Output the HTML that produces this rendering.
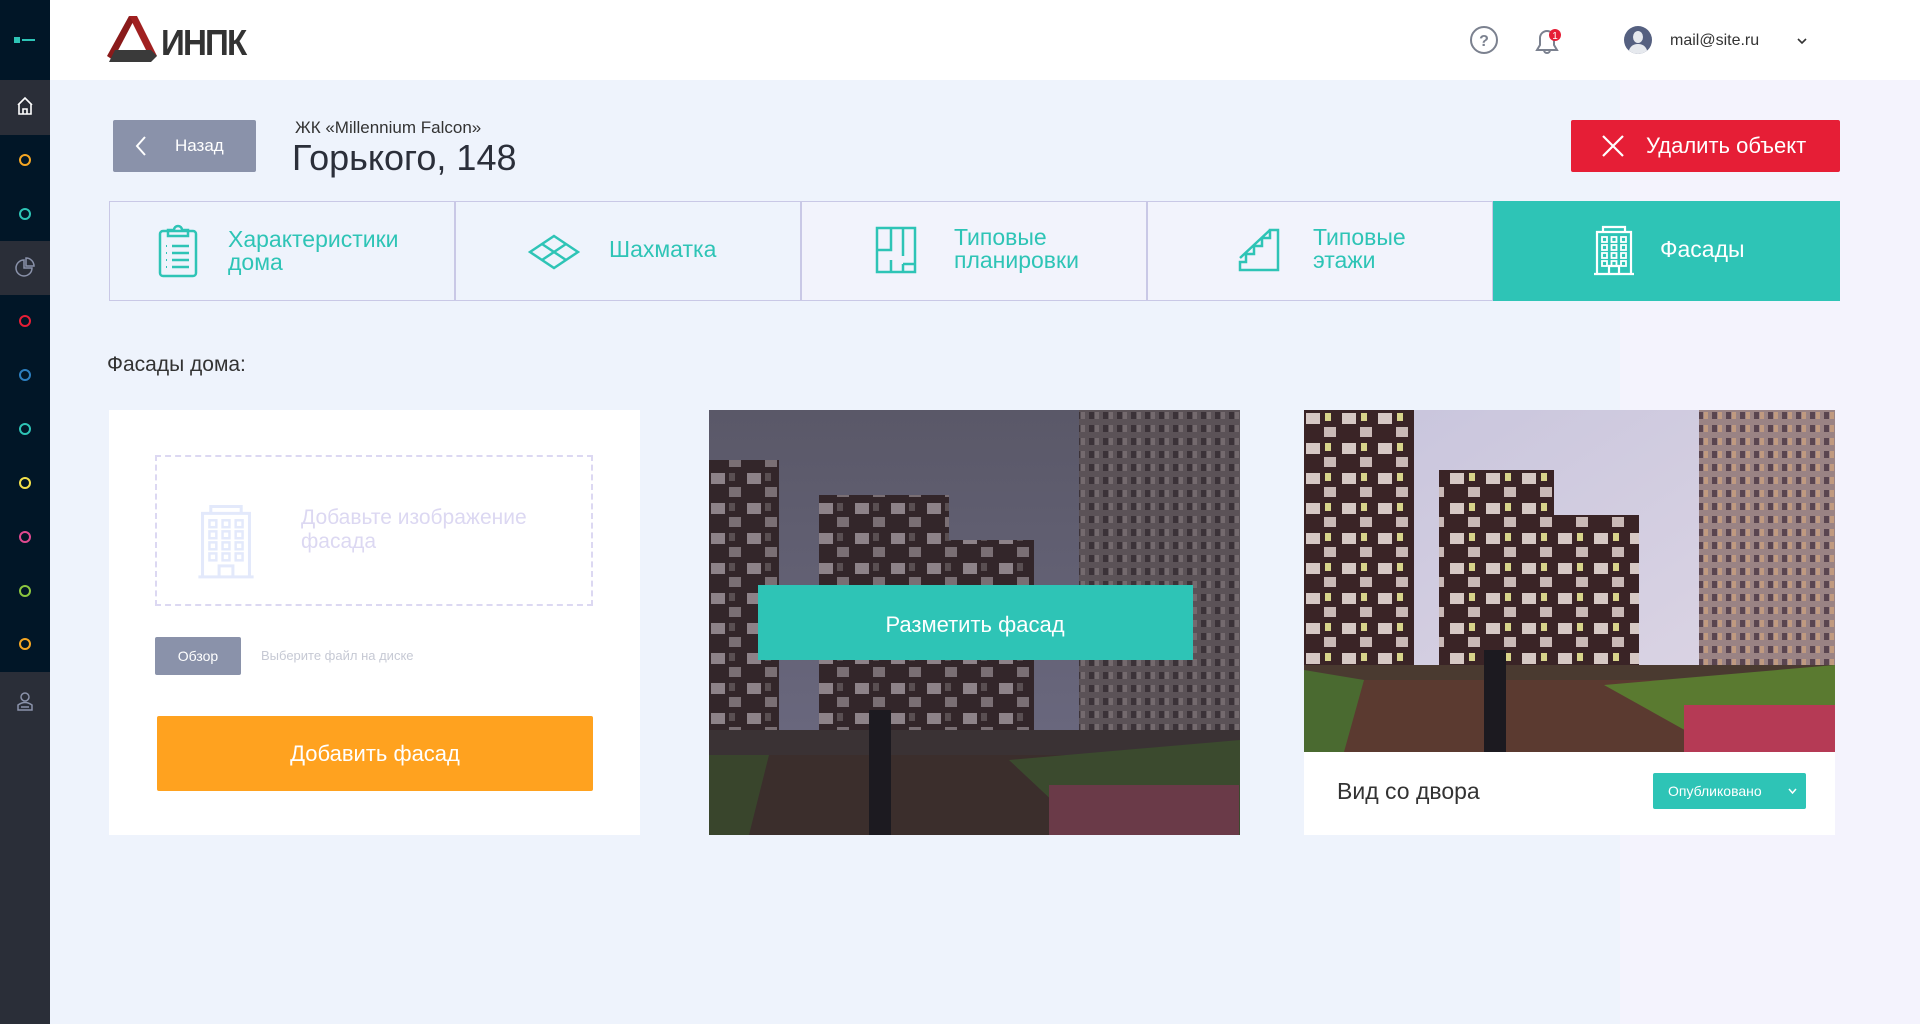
<!DOCTYPE html>
<html><head><meta charset="utf-8">
<style>
*{margin:0;padding:0;box-sizing:border-box}
body{width:1920px;height:1024px;overflow:hidden;background:#eef3fc;font-family:"Liberation Sans",sans-serif;position:relative;color:#2b2f3a}
.abs{position:absolute}
#side{left:0;top:0;width:50px;height:1024px;background:#011627}
.ci{position:absolute;left:19px;width:12px;height:12px;border-radius:50%;border:2px solid}
#hdr{left:50px;top:0;width:1870px;height:80px;background:#fff}
.tab{position:absolute;top:201px;height:100px;width:346px;border:1px solid #c9c8e6;display:flex;align-items:center;font-size:23px;color:#2ec4b6;line-height:23px}
.card{position:absolute;top:410px;height:425px;width:531px;background:#fff}
</style></head><body>
<div id="side" class="abs">
 <div class="abs" style="left:14px;top:37px;width:6px;height:6px;background:#2ec4b6"></div>
 <div class="abs" style="left:22px;top:39px;width:13px;height:2px;background:#2ec4b6"></div>
 <div class="abs" style="left:0;top:80px;width:50px;height:55px;background:#2a2e38"></div>
 <svg class="abs" style="left:16px;top:96px" width="18" height="20" viewBox="0 0 18 20"><path d="M2 9 L9 2 L16 9 M3 8 V18 H15 V8 M7 18 V13 H11 V18" fill="none" stroke="#fff" stroke-width="1.6"/></svg>
 <div class="ci" style="top:154px;border-color:#f5a623"></div>
 <div class="ci" style="top:208px;border-color:#2ec4b6"></div>
 <div class="abs" style="left:0;top:241px;width:50px;height:54px;background:#2a2e38"></div>
 <svg class="abs" style="left:15px;top:257px" width="20" height="20" viewBox="0 0 20 20"><path d="M9 3 A8 8 0 1 0 17 11 H9 Z" fill="none" stroke="#8a92aa" stroke-width="1.5"/><path d="M11 1 A8 8 0 0 1 19 9 H11 Z" fill="none" stroke="#8a92aa" stroke-width="1.5"/></svg>
 <div class="ci" style="top:315px;border-color:#e61e36"></div>
 <div class="ci" style="top:369px;border-color:#2d7fc0"></div>
 <div class="ci" style="top:423px;border-color:#2ec4b6"></div>
 <div class="ci" style="top:477px;border-color:#f3e14b"></div>
 <div class="ci" style="top:531px;border-color:#e0498f"></div>
 <div class="ci" style="top:585px;border-color:#8cc63f"></div>
 <div class="ci" style="top:638px;border-color:#f5a623"></div>
 <div class="abs" style="left:0;top:672px;width:50px;height:352px;background:#2a2e38"></div>
 <svg class="abs" style="left:16px;top:691px" width="18" height="20" viewBox="0 0 18 20"><circle cx="9" cy="6" r="4" fill="none" stroke="#8a92aa" stroke-width="1.5"/><path d="M2 19 V14 Q9 9 16 14 V19 Z M5 16 H13" fill="none" stroke="#8a92aa" stroke-width="1.5"/></svg>
</div>
<div id="hdr" class="abs">
 <svg class="abs" style="left:57px;top:16px" width="50" height="46" viewBox="0 0 50 46"><path d="M22 0 L30 0 L50 40 L42 40 Z" fill="#a02020"/><path d="M22 0 L0 40 L6 44 L26 6 Z" fill="#8a1a1a"/><path d="M8 34 H44 L50 40 L44 46 H2 Z" fill="#3a3a3a"/></svg>
 <div class="abs" style="left:111px;top:25px;font-size:36px;font-weight:bold;color:#333;letter-spacing:-2px;line-height:36px;transform:scaleX(0.92);transform-origin:left">ИНПК</div>
 <svg class="abs" style="left:1419px;top:25px" width="30" height="30" viewBox="0 0 30 30"><circle cx="15" cy="15" r="13" fill="none" stroke="#7b818f" stroke-width="2"/><text x="15" y="21" font-size="16" text-anchor="middle" fill="#7b818f" font-family="Liberation Sans" font-weight="bold">?</text></svg>
 <svg class="abs" style="left:1483px;top:25px" width="30" height="30" viewBox="0 0 30 30"><path d="M4 25 H24 L21 20 V13 A7 7 0 0 0 7 13 V20 Z M11 25 A3 3 0 0 0 17 25" fill="none" stroke="#7b818f" stroke-width="2"/><circle cx="22" cy="10" r="6" fill="#e61e36"/><text x="22" y="14" font-size="10" text-anchor="middle" fill="#fff" font-family="Liberation Sans">1</text></svg>
 <svg class="abs" style="left:1573px;top:25px" width="30" height="30" viewBox="0 0 30 30"><clipPath id="cc"><circle cx="15" cy="15" r="14"/></clipPath><circle cx="15" cy="15" r="14" fill="#556080"/><g clip-path="url(#cc)" fill="#e6e9ee"><ellipse cx="15" cy="12" rx="5" ry="6"/><path d="M5 30 Q6 19 15 19 Q24 19 25 30 Z"/></g></svg>
 <div class="abs" style="left:1620px;top:32px;font-size:16px;color:#333">mail@site.ru</div>
 <svg class="abs" style="left:1747px;top:37px" width="10" height="8" viewBox="0 0 10 8"><path d="M1 2 L5 6 L9 2" fill="none" stroke="#333" stroke-width="1.6"/></svg>
</div>
<div class="abs" style="left:1620px;top:80px;width:300px;height:944px;background:#f4f3fd"></div>
<div class="abs" style="left:113px;top:120px;width:143px;height:52px;background:#8a92aa;border-radius:2px;color:#fff;font-size:17px">
 <svg class="abs" style="left:22px;top:16px" width="12" height="20" viewBox="0 0 12 20"><path d="M10 1 L2 10 L10 19" fill="none" stroke="#fff" stroke-width="2"/></svg>
 <span class="abs" style="left:62px;top:16px">Назад</span>
</div>
<div class="abs" style="left:295px;top:118px;font-size:17px;color:#333">ЖК «Millennium Falcon»</div>
<div class="abs" style="left:292px;top:137px;font-size:36px;color:#2b2f3a">Горького, 148</div>
<div class="abs" style="left:1571px;top:120px;width:269px;height:52px;background:#e61e36;border-radius:2px;color:#fff;font-size:22px">
 <svg class="abs" style="left:31px;top:15px" width="22" height="22" viewBox="0 0 22 22"><path d="M1 1 L21 21 M21 1 L1 21" stroke="#fff" stroke-width="2.2"/></svg>
 <span class="abs" style="left:75px;top:13px">Удалить объект</span>
</div>
<div class="tab" style="left:109px;background:#eef3fc">
 <svg class="abs" style="left:48px;top:22px" width="40" height="54" viewBox="0 0 40 54"><rect x="2" y="7" width="36" height="45" rx="3" fill="none" stroke="#2ec4b6" stroke-width="2.5"/><path d="M10 12 V6 H16 A4 4 0 0 1 24 6 H30 V12 Z" fill="none" stroke="#2ec4b6" stroke-width="2.5"/><path d="M14 22 H31 M14 29 H31 M14 36 H31 M14 43 H31" stroke="#2ec4b6" stroke-width="2.5"/><path d="M8 22 H9 M8 29 H9 M8 36 H9 M8 43 H9" stroke="#2ec4b6" stroke-width="2"/></svg>
 <span class="abs" style="left:118px;top:26px">Характеристики<br>дома</span>
</div>
<div class="tab" style="left:455px;background:#eef3fc">
 <svg class="abs" style="left:72px;top:32px" width="52" height="36" viewBox="0 0 52 36"><path d="M26 2 L50 18 L26 34 L2 18 Z M14 10 L38 26 M38 10 L14 26" fill="none" stroke="#2ec4b6" stroke-width="2.5"/></svg>
 <span class="abs" style="left:153px;top:36px">Шахматка</span>
</div>
<div class="tab" style="left:801px;background:#f2f3fc">
 <svg class="abs" style="left:73px;top:24px" width="42" height="48" viewBox="0 0 42 48"><rect x="2" y="2" width="38" height="44" fill="none" stroke="#2ec4b6" stroke-width="2.5"/><path d="M16 2 V24 H2 M28 2 V30 M16 34 V46 M28 38 H40 M28 38 V46" fill="none" stroke="#2ec4b6" stroke-width="2.5"/></svg>
 <span class="abs" style="left:152px;top:24px">Типовые<br>планировки</span>
</div>
<div class="tab" style="left:1147px;background:#f2f3fc">
 <svg class="abs" style="left:90px;top:26px" width="42" height="44" viewBox="0 0 42 44"><path d="M2 42 H40 V2 H32 V10 H24 V18 H16 V26 H8 V34 H2 Z M2 30 L32 2" fill="none" stroke="#2ec4b6" stroke-width="2.5"/></svg>
 <span class="abs" style="left:165px;top:24px">Типовые<br>этажи</span>
</div>
<div class="tab" style="left:1493px;width:347px;background:#2ec4b6;border-color:#2ec4b6;color:#fff">
 <svg class="abs" style="left:99px;top:22px" width="42" height="52" viewBox="0 0 42 52"><path d="M4 50 V8 H38 V50 M10 8 V3 H32 V8 M1 50 H41 M16 50 V42 H26 V50" fill="none" stroke="#fff" stroke-width="2.2"/><g fill="none" stroke="#fff" stroke-width="1.8"><rect x="9" y="13" width="5" height="5"/><rect x="18.5" y="13" width="5" height="5"/><rect x="28" y="13" width="5" height="5"/><rect x="9" y="21" width="5" height="5"/><rect x="18.5" y="21" width="5" height="5"/><rect x="28" y="21" width="5" height="5"/><rect x="9" y="29" width="5" height="5"/><rect x="18.5" y="29" width="5" height="5"/><rect x="28" y="29" width="5" height="5"/><rect x="9" y="37" width="5" height="5"/><rect x="18.5" y="37" width="5" height="5"/><rect x="28" y="37" width="5" height="5"/></g></svg>
 <span class="abs" style="left:166px;top:36px">Фасады</span>
</div>
<div class="abs" style="left:107px;top:353px;font-size:21px;color:#333">Фасады дома:</div>
<div class="card" style="left:109px">
 <div class="abs" style="left:46px;top:45px;width:438px;height:151px;border:2px dashed #dcd8f2"></div>
 <svg class="abs" style="left:88px;top:92px" width="58" height="78" viewBox="0 0 42 56"><path d="M4 54 V8 H38 V54 M10 8 V3 H32 V8 M1 54 H41 M16 54 V46 H26 V54" fill="none" stroke="#e3e9fb" stroke-width="2.2"/><g fill="none" stroke="#e3e9fb" stroke-width="1.8"><rect x="9" y="13" width="5" height="5"/><rect x="18.5" y="13" width="5" height="5"/><rect x="28" y="13" width="5" height="5"/><rect x="9" y="21" width="5" height="5"/><rect x="18.5" y="21" width="5" height="5"/><rect x="28" y="21" width="5" height="5"/><rect x="9" y="29" width="5" height="5"/><rect x="18.5" y="29" width="5" height="5"/><rect x="28" y="29" width="5" height="5"/><rect x="9" y="37" width="5" height="5"/><rect x="18.5" y="37" width="5" height="5"/><rect x="28" y="37" width="5" height="5"/></g></svg>
 <div class="abs" style="left:192px;top:96px;font-size:21px;line-height:24px;color:#dcd8f2">Добавьте изображение<br>фасада</div>
 <div class="abs" style="left:46px;top:227px;width:86px;height:38px;background:#8a92aa;border-radius:2px;color:#fff;font-size:14px;text-align:center;line-height:38px">Обзор</div>
 <div class="abs" style="left:152px;top:238px;font-size:13px;color:#c6c9d4">Выберите файл на диске</div>
 <div class="abs" style="left:48px;top:306px;width:436px;height:75px;background:#ffa21f;border-radius:2px;color:#fff;font-size:22px;text-align:center;line-height:75px">Добавить фасад</div>
</div>
<svg class="abs" style="left:709px;top:410px" width="531" height="425" viewBox="0 0 531 425">
 <defs>
  <linearGradient id="sk1" x1="0" y1="0" x2="0" y2="1"><stop offset="0" stop-color="#5a5868"/><stop offset="1" stop-color="#6e6c84"/></linearGradient>
  <pattern id="w1" width="36" height="30" patternUnits="userSpaceOnUse"><rect width="36" height="30" fill="#33262a"/><rect x="2" y="3" width="14" height="11" fill="#8d8288"/><rect x="20" y="17" width="12" height="10" fill="#7a6f74"/><rect x="20" y="3" width="6" height="8" fill="#5a4f52"/></pattern>
  <pattern id="w1b" width="14" height="13" patternUnits="userSpaceOnUse"><rect width="14" height="13" fill="#5b5257"/><rect x="2" y="2" width="5" height="7" fill="#3b3238"/><rect x="8" y="2" width="4" height="7" fill="#746a6e"/></pattern>
 </defs>
 <rect width="531" height="425" fill="url(#sk1)"/>
 <rect x="0" y="50" width="70" height="320" fill="url(#w1)"/>
 <rect x="110" y="85" width="130" height="280" fill="url(#w1)"/>
 <rect x="230" y="130" width="95" height="230" fill="url(#w1)"/>
 <rect x="370" y="0" width="161" height="340" fill="url(#w1b)"/>
 <rect x="0" y="320" width="531" height="40" fill="#3a3234"/>
 <path d="M0 345 H531 V425 H0 Z" fill="#3b2e2c"/>
 <path d="M300 350 L531 330 V425 H380 Z" fill="#3b4a2e"/>
 <path d="M0 345 L60 345 L40 425 H0 Z" fill="#39452c"/>
 <rect x="340" y="375" width="190" height="50" fill="#6a3a48"/>
 <rect x="160" y="300" width="22" height="125" fill="#1c1a20"/>
 <rect x="49" y="175" width="435" height="75" fill="#2ec4b6"/>
 <text x="266" y="222" text-anchor="middle" font-family="Liberation Sans" font-size="22" fill="#fff">Разметить фасад</text>
</svg>
<div class="card" style="left:1304px">
 <svg class="abs" style="left:0;top:0" width="531" height="342" viewBox="0 0 531 342">
  <defs>
   <linearGradient id="sk2" x1="0" y1="0" x2="1" y2="1"><stop offset="0" stop-color="#c7c4dc"/><stop offset="1" stop-color="#e0d8e6"/></linearGradient>
   <pattern id="w2" width="36" height="30" patternUnits="userSpaceOnUse"><rect width="36" height="30" fill="#3a2426"/><rect x="2" y="3" width="14" height="11" fill="#d6c8c4"/><rect x="20" y="17" width="12" height="10" fill="#c9b9b6"/><rect x="21" y="3" width="6" height="8" fill="#d8d48a"/></pattern>
   <pattern id="w2b" width="14" height="13" patternUnits="userSpaceOnUse"><rect width="14" height="13" fill="#9a8384"/><rect x="2" y="2" width="5" height="7" fill="#5a4550"/><rect x="8" y="2" width="4" height="7" fill="#c09a80"/></pattern>
  </defs>
  <rect width="531" height="342" fill="url(#sk2)"/>
  <rect x="0" y="0" width="110" height="260" fill="url(#w2)"/>
  <rect x="135" y="60" width="115" height="220" fill="url(#w2)"/>
  <rect x="240" y="105" width="95" height="175" fill="url(#w2)"/>
  <rect x="395" y="0" width="136" height="260" fill="url(#w2b)"/>
  <rect x="0" y="255" width="531" height="25" fill="#4a3a30"/>
  <path d="M0 270 H531 V342 H0 Z" fill="#5b3a30"/>
  <path d="M300 275 L531 255 V342 H420 Z" fill="#5a7a30"/>
  <path d="M0 260 L60 270 L40 342 H0 Z" fill="#4a6a30"/>
  <rect x="380" y="295" width="151" height="47" fill="#b53a55"/>
  <rect x="180" y="240" width="22" height="102" fill="#1c1a20"/>
 </svg>
 <div class="abs" style="left:33px;top:368px;font-size:23px;color:#333">Вид со двора</div>
 <div class="abs" style="left:349px;top:363px;width:153px;height:36px;background:#2ec4b6;border-radius:2px;color:#fff;font-size:14px;line-height:36px;padding-left:15px">Опубликовано
  <svg class="abs" style="left:135px;top:15px" width="9" height="7" viewBox="0 0 9 7"><path d="M1 1 L4.5 5 L8 1" fill="none" stroke="#fff" stroke-width="1.5"/></svg></div>
</div>
</body></html>
